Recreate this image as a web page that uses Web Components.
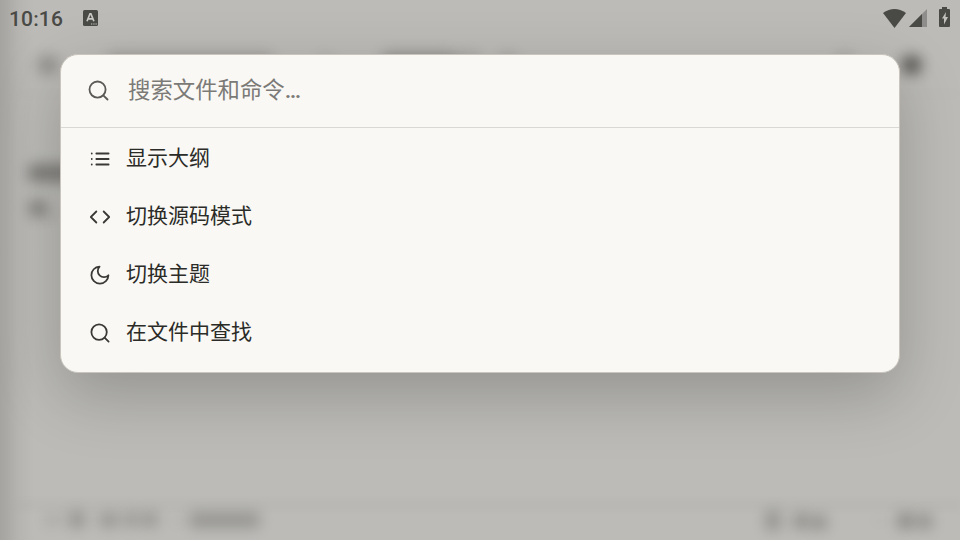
<!DOCTYPE html>
<html lang="zh-CN">
<head>
<meta charset="utf-8">
<title>命令面板</title>
<style>
html, body { margin: 0; width: 960px; height: 540px; overflow: hidden; background: #bcbbb7; }
body { font-family: Roboto, "Noto Sans CJK SC", sans-serif; color: #2b2b29; }
</style>
</head>
<body>
<app-screen>
  <blurred-page slot="backdrop"></blurred-page>
  <status-bar slot="status" time="10:16"></status-bar>
  <command-palette placeholder="搜索文件和命令…">
    <command-item icon="list">显示大纲</command-item>
    <command-item icon="code">切换源码模式</command-item>
    <command-item icon="moon">切换主题</command-item>
    <command-item icon="search">在文件中查找</command-item>
  </command-palette>
</app-screen>
<script>
const ICONS = {
  search: '<circle cx="11" cy="11" r="8.4"/><path d="m21.4 21.4-4.4-4.4"/>',
  list: '<path d="M8 6h13.4M8 12h13.4M8 18h13.4M3 6h.01M3 12h.01M3 18h.01"/>',
  code: '<path d="m16 18 6-6-6-6M8 6l-6 6 6 6"/>',
  moon: '<path d="M11.5 2.8a6.3 6.3 0 0 0 9.7 9.5 9.3 9.3 0 1 1-9.7-9.5Z"/>'
};

class ShadowElement extends HTMLElement {
  constructor() {
    super();
    this.attachShadow({ mode: 'open' });
  }
  connectedCallback() { this.shadowRoot.innerHTML = this.render(); }
}

customElements.define('line-icon', class extends ShadowElement {
  render() {
    return `<style>
      :host { display: block; width: 22px; height: 22px; flex: none; }
      svg { display: block; width: 100%; height: 100%; fill: none; stroke: currentColor;
        stroke-width: var(--stroke, 2); stroke-linecap: round; stroke-linejoin: round; }
    </style><svg viewBox="0 0 24 24">${ICONS[this.getAttribute('name')]}</svg>`;
  }
});

customElements.define('app-screen', class extends ShadowElement {
  render() {
    return `<style>
      :host { display: grid; grid-template: 38px 502px / 960px; width: 960px; height: 540px; overflow: hidden; }
      slot[name=backdrop]::slotted(*) { grid-area: 1 / 1 / 3 / 2; }
      slot[name=status]::slotted(*) { grid-area: 1 / 1; z-index: 2; }
      main { grid-area: 2 / 1; padding: 16px 60px 0; z-index: 1; }
    </style>
    <slot name="backdrop"></slot><slot name="status"></slot><main><slot></slot></main>`;
  }
});

/* Out-of-focus editor page under the scrim: [x, y, width, height, opacity] */
const SMUDGES = [
  [38, 56, 20, 18, .32],
  [108, 53, 164, 16, .22], [318, 54, 14, 14, .1],
  [382, 53, 74, 16, .34], [456, 53, 24, 14, .18], [500, 54, 16, 12, .22], [836, 53, 18, 14, .16],
  [902, 56, 19, 18, .74],
  [28, 164, 50, 18, .46], [29, 200, 18, 17, .42], [48, 212, 7, 6, .2],
  [44, 515, 18, 10, .14], [69, 511, 16, 17, .3],
  [99, 513, 20, 14, .28], [124, 512, 15, 15, .26], [142, 512, 16, 15, .28],
  [172, 514, 10, 12, .05], [189, 512, 71, 16, .28],
  [765, 510, 16, 21, .28], [793, 513, 16, 16, .32], [811, 515, 16, 15, .32],
  [872, 519, 14, 4, .05], [897, 513, 17, 16, .36], [917, 514, 15, 15, .33]
];

customElements.define('blurred-page', class extends ShadowElement {
  render() {
    return `<style>
      :host { display: block; position: relative; overflow: hidden;
        background: linear-gradient(90deg, #a5a4a0 0, #aaa9a5 7px, #b5b4b1 18px, #bcbbb7 34px); }
      .toolbar { position: absolute; inset: 92px 0 auto 14px; height: 4px; background: #aaa9a6; opacity: .12; filter: blur(3px); }
      .footer { position: absolute; inset: 498px 0 auto 14px; height: 14px; background: #aaa9a6; opacity: .14; filter: blur(2px); }
      i { position: absolute; border-radius: 5px; background: #383733; filter: blur(7px); }
    </style><div class="toolbar"></div><div class="footer"></div>
    ${SMUDGES.map(([x, y, w, h, o]) => `<i style="left:${x}px;top:${y}px;width:${w}px;height:${h}px;opacity:${o}"></i>`).join('')}`;
  }
});

customElements.define('status-bar', class extends ShadowElement {
  render() {
    return `<style>
      :host { display: flex; align-items: center; box-sizing: border-box; height: 36px; padding: 0 10px 0 9px; color: #494946; }
      time { font: 500 21px/24px Roboto, sans-serif; letter-spacing: .15px; width: 74px; padding-top: 1px; }
      svg { display: block; flex: none; }
      .right { display: flex; margin-left: auto; align-items: center; }
    </style>
    <time>${this.getAttribute('time')}</time>
    <svg width="15" height="16" viewBox="0 0 15 16"><rect width="15" height="16" rx="1.5" fill="currentColor"/>
      <path d="m4 11.2 3-7.4h.9l3 7.4M5.2 8.8h4.4" fill="none" stroke="#c9c8c4" stroke-width="1.7"/>
      <path d="M8 14h1.3M10.3 14h1.3M12.5 14h1.3" stroke="#c9c8c4" stroke-width="1.2"/></svg>
    <div class="right">
      <svg width="23" height="19" viewBox="0 0 23 19"><path d="M0 4Q11.5-4 23 4L11.5 19Z" fill="currentColor"/></svg>
      <svg width="18" height="18" viewBox="0 0 18 18" style="margin:0 0 1px 3.5px"><path d="M18 0V18H0Z" fill="#8e8d8b"/><path d="M13 5V18H0Z" fill="currentColor"/></svg>
      <svg width="11" height="20" viewBox="0 0 11 20" style="margin:0 0 2px 12px"><path d="M3 0h5v2h2q1 0 1 1v16q0 1-1 1H1q-1 0-1-1V3q0-1 1-1h2Z" fill="currentColor"/><path d="M7 5 3 11.5H5V17.5L9 10H6.5Z" fill="#c2c1bd"/></svg>
    </div>`;
  }
});

customElements.define('command-palette', class extends ShadowElement {
  render() {
    return `<style>
      :host { display: block; box-sizing: border-box; width: 840px; height: 319px; border: 1px solid #c9c5bc;
        border-radius: 18px; background: #f9f8f4; overflow: hidden; box-shadow: 0 22px 64px rgba(0,0,0,.21); }
      header { display: flex; align-items: center; gap: 18.5px; box-sizing: border-box; height: 73px;
        padding: 0 25.5px; border-bottom: 1px solid #d9d8d4; color: #5b5a57; --stroke: 1.9; }
      line-icon { width: 23px; height: 23px; margin-top: -1px; }
      span { color: #7b7a77; font-size: 22.4px; line-height: 30px; margin-top: -2px; }
      b { font-weight: 600; }
      nav { display: flex; flex-direction: column; padding-top: 2px; }
    </style>
    <header><line-icon name="search"></line-icon><span>${this.getAttribute('placeholder').replace('…', '<b>…</b>')}</span></header>
    <nav><slot></slot></nav>`;
  }
});

customElements.define('command-item', class extends ShadowElement {
  render() {
    return `<style>
      :host { display: flex; align-items: center; gap: 15px; height: 58px; padding: 0 28px;
        font-size: 21px; line-height: 30px; color: #2b2b28; --stroke: 1.95; }
      span { margin-top: -3px; }
      line-icon { color: #3a3936; }
    </style><line-icon name="${this.getAttribute('icon')}"></line-icon><span><slot></slot></span>`;
  }
});
</script>
</body>
</html>
